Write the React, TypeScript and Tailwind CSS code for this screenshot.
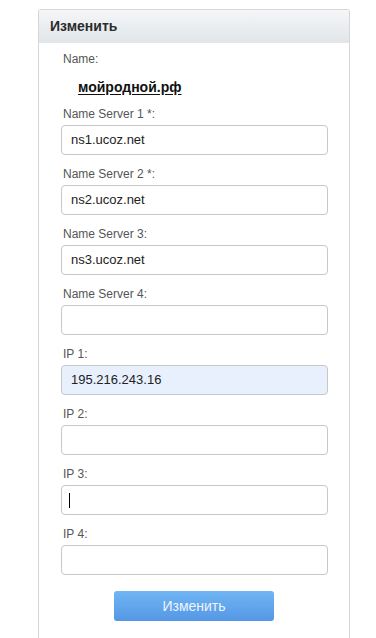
import React from "react";

const fields: { label: string; value: string; autofill?: boolean; caret?: boolean }[] = [
  { label: "Name Server 1 *:", value: "ns1.ucoz.net" },
  { label: "Name Server 2 *:", value: "ns2.ucoz.net" },
  { label: "Name Server 3:", value: "ns3.ucoz.net" },
  { label: "Name Server 4:", value: "" },
  { label: "IP 1:", value: "195.216.243.16", autofill: true },
  { label: "IP 2:", value: "" },
  { label: "IP 3:", value: "", caret: true },
  { label: "IP 4:", value: "" },
];

export default function App() {
  return (
    <div
      className="w-[376px] h-[638px] bg-white overflow-hidden"
      style={{ fontFamily: '"Liberation Sans", Arial, sans-serif' }}
    >
      <div className="ml-[38px] mt-[9px] w-[312px] h-[640px] border-x border-t border-[#d6d6d6] rounded-t-[3px]">
        <div className="h-[33px] flex items-center pl-[11px] bg-gradient-to-b from-[#f4f6f8] to-[#e2e6e9] border-b border-[#e4e6e8]">
          <span className="text-[14px] font-bold text-[#2b2b2b]">Изменить</span>
        </div>
        <div className="pt-[9px] pl-[22px]">
          <div className="pl-[2px] text-[12px] leading-[14px] text-[#555]">Name:</div>
          <div className="mt-[13px] pl-[17px] text-[14px] leading-[16px] font-bold text-[#111] underline underline-offset-2">
            мойродной.рф
          </div>
          <div className="mt-[12px] flex flex-col gap-[12px]">
            {fields.map((f) => (
              <div key={f.label} className="flex flex-col">
                <div className="pl-[2px] text-[12px] leading-[14px] text-[#555]">{f.label}</div>
                <div
                  className={
                    "mt-[4px] w-[267px] h-[30px] rounded-[4px] border border-[#c8c8c8] flex items-center pl-[9px] text-[13px] text-[#222] " +
                    (f.autofill ? "bg-[#e8f0fe]" : "bg-white")
                  }
                >
                  {f.value}
                  {f.caret && <span className="ml-[-2px] block w-[1px] h-[15px] bg-black" />}
                </div>
              </div>
            ))}
          </div>
        </div>
        <div className="mt-[16px] flex justify-center">
          <button className="w-[160px] h-[30px] rounded-[3px] bg-gradient-to-b from-[#70b5f3] to-[#5597e5] text-[14px] text-[#eef5fd]">
            Изменить
          </button>
        </div>
      </div>
    </div>
  );
}
